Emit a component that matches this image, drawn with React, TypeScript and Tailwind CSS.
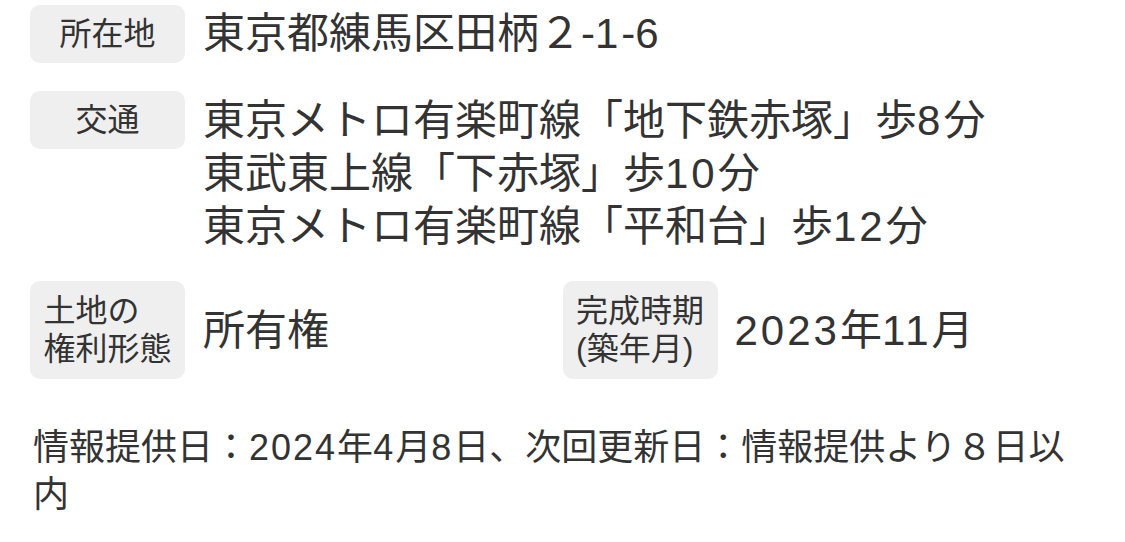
import React from "react";

const font = { fontFamily: '"Liberation Sans", "Noto Sans CJK JP", sans-serif' };

function Num({ text, small }: { text: string; small?: boolean }) {
  const parts = text.split(/([0-9]+)/);
  return (
    <>
      {parts.map((p, i) =>
        /^[0-9]+$/.test(p) ? (
          <span key={i} className={small ? "tracking-[2px]" : "tracking-[3px]"}>
            {p}
          </span>
        ) : (
          <React.Fragment key={i}>{p}</React.Fragment>
        )
      )}
    </>
  );
}

function Label({ children, tall }: { children: React.ReactNode; tall?: boolean }) {
  return (
    <div
      className={`w-[155px] shrink-0 rounded-[10px] bg-[#efefef] flex items-center justify-center text-[32px] text-[#333333] ${
        tall ? "h-[98px] leading-[38px]" : "h-[58px] leading-[38px]"
      }`}
    >
      <div className="text-left">{children}</div>
    </div>
  );
}

export default function App() {
  return (
    <div className="w-[1125px] h-[542px] bg-white text-[#333333] px-[30px] pt-[5px]" style={font}>
      <div className="flex items-start gap-[18px]">
        <Label>所在地</Label>
        <div className="text-[42px] leading-[58px]">
          <Num text="東京都練馬区田柄２-1-6" />
        </div>
      </div>

      <div className="flex items-start gap-[18px] mt-[28px]">
        <Label>交通</Label>
        <div className="text-[42px] leading-[53px] pt-[3px]">
          <div>
            <Num text="東京メトロ有楽町線「地下鉄赤塚」歩8分" />
          </div>
          <div>
            <Num text="東武東上線「下赤塚」歩10分" />
          </div>
          <div>
            <Num text="東京メトロ有楽町線「平和台」歩12分" />
          </div>
        </div>
      </div>

      <div className="grid grid-cols-2 mt-[28px]">
        <div className="flex items-center gap-[18px]">
          <Label tall>
            土地の
            <br />
            権利形態
          </Label>
          <div className="text-[42px] leading-[53px]">所有権</div>
        </div>
        <div className="flex items-center gap-[17px]">
          <Label tall>
            完成時期
            <br />
            (築年月)
          </Label>
          <div className="text-[42px] leading-[53px]">
            <Num text="2023年11月" />
          </div>
        </div>
      </div>

      <div className="mt-[45px] pl-[3px] text-[36px] leading-[47px]">
        <Num small text="情報提供日：2024年4月8日、次回更新日：情報提供より８日以" />
        <br />
        内
      </div>
    </div>
  );
}
